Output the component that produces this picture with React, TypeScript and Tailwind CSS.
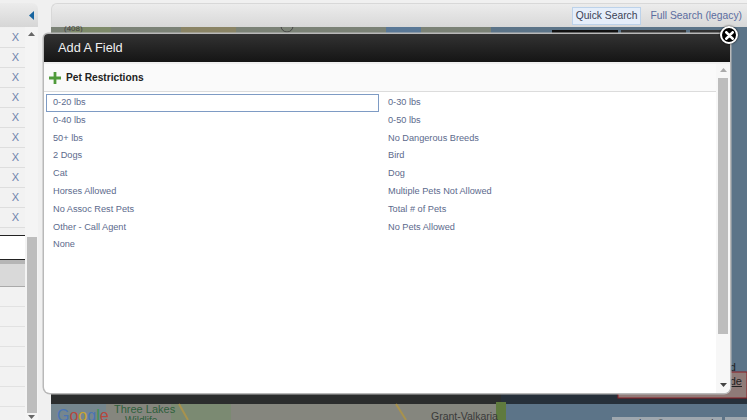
const rows = Array.from({ length: 10 });
const lowerRows = Array.from({ length: 7 });

const options = [
  ['0-20 lbs', '0-30 lbs'],
  ['0-40 lbs', '0-50 lbs'],
  ['50+ lbs', 'No Dangerous Breeds'],
  ['2 Dogs', 'Bird'],
  ['Cat', 'Dog'],
  ['Horses Allowed', 'Multiple Pets Not Allowed'],
  ['No Assoc Rest Pets', 'Total # of Pets'],
  ['Other - Call Agent', 'No Pets Allowed'],
  ['None', ''],
];

// dimmed map behind the dialog
const MapBackdrop = () => (
  <svg className="h-full w-full" viewBox="0 0 696 393" preserveAspectRatio="none">
    <rect width="696" height="393" fill="#5c7488" />
    <rect x="0" y="0" width="440" height="8" fill="#7b8276" />
    <rect x="20" y="0" width="40" height="8" fill="#7e8a6a" />
    <rect x="130" y="0" width="55" height="8" fill="#8a8465" />
    <rect x="335" y="0" width="35" height="8" fill="#5a7896" />
    <circle cx="236" cy="-1" r="6" fill="none" stroke="#444" />
    <rect x="501" y="3" width="66" height="5" fill="#111" />
    <rect x="570" y="3" width="65" height="5" fill="#333" />
    <rect x="639" y="3" width="40" height="5" fill="#333" />
    <rect x="0" y="366" width="696" height="11" fill="#26303a" />
    <rect x="0" y="366" width="450" height="11" fill="#2b2d2d" />
    <rect x="0" y="377" width="450" height="16" fill="#85867e" />
    <rect x="0" y="377" width="55" height="16" fill="#75868e" />
    <rect x="120" y="377" width="60" height="16" fill="#7b8a72" />
    <rect x="445" y="375" width="10" height="18" fill="#5f7a3e" />
    <path d="M128 377 L137 393" stroke="#a8924d" strokeWidth="2" fill="none" />
    <path d="M345 377 L355 393" stroke="#a8924d" strokeWidth="2" fill="none" />
    <rect x="567" y="345" width="129" height="26" fill="#8f7b78" stroke="#8a1f24" />
  </svg>
);

export default function App() {
  return (
    <div className="relative flex h-[420px] w-[747px] overflow-hidden bg-[#f0f0f0] font-['Liberation_Sans',Arial,sans-serif]">
      {/* Left list */}
      <aside className="flex w-[38px] shrink-0 flex-col pt-[3px]">
        <div className="flex h-[24px] shrink-0 items-center justify-end rounded-tr-md bg-gradient-to-b from-[#ececec] to-[#d6d6d6] pr-[3px]">
          <svg width="6" height="9" viewBox="0 0 6 9"><path d="M5 0v9L0 4.500z" fill="#17649f" /></svg>
        </div>
        <div className="flex min-h-0 flex-1">
          <div className="flex w-[25px] shrink-0 flex-col pt-[1px]">
            {rows.map((_, i) => (
              <div key={i} className="flex h-[20px] shrink-0 items-center justify-end border-b border-[#dedede] bg-[#f2f2f2] pr-[6px] text-[11px] leading-none text-[#6f84ad]">
                X
              </div>
            ))}
            <div className="mt-[7px] h-[25px] shrink-0 border-y border-y-[#222] bg-white" />
            <div className="h-[27px] shrink-0 border-t-[4px] border-b border-t-[#b5b5b5] border-b-[#aaa] bg-[#d9d9d9]" />
            {lowerRows.map((_, i) => (
              <div key={i} className="h-[20px] shrink-0 border-b border-[#e2e2e2] bg-[#f2f2f2]" />
            ))}
          </div>
          <div className="flex w-[13px] shrink-0 flex-col items-center bg-[#f4f4f4]">
            <svg className="mt-[5px]" width="7" height="4" viewBox="0 0 7 4"><path d="M3.500 0L7 4H0z" fill="#666" /></svg>
            <div className="mt-[201px] h-[176px] w-[10px] bg-[#bdbdbd]" />
            <svg className="mt-[2px]" width="7" height="4" viewBox="0 0 7 4"><path d="M0 0h7L3.500 4z" fill="#666" /></svg>
          </div>
        </div>
      </aside>

      {/* Main area */}
      <main className="ml-[13px] flex min-w-0 flex-1 flex-col pt-[3px]">
        <div className="flex h-[24px] shrink-0 items-center justify-end gap-[9px] rounded-tl-md border-t border-l border-[#d8d8d8] bg-gradient-to-b from-[#ececec] to-[#d8d8d8] pr-[5px] text-[10.3px]">
          <span className="border border-[#bcd2ea] bg-[#e5eefa] px-[3px] py-px leading-[14px] text-[#3b4256]">Quick Search</span>
          <span className="text-[#5b6c9f]">Full Search (legacy)</span>
        </div>
        <div className="relative min-h-0 flex-1">
          <MapBackdrop />
          <span className="absolute top-[-2px] left-[13px] text-[8px] leading-none text-[#444]">(408)</span>
          <span className="absolute bottom-[-6px] left-[6px] text-[16px] leading-[20px]">
            <span className="text-[#4a74b4]">G</span>
            <span className="text-[#b5473c]">o</span>
            <span className="text-[#c9a530]">o</span>
            <span className="text-[#4a74b4]">g</span>
            <span className="text-[#3f9150]">l</span>
            <span className="text-[#b5473c]">e</span>
          </span>
          <span className="absolute bottom-[5px] left-[63px] text-[11px] leading-none text-[#2f5f3c]">Three Lakes</span>
          <span className="absolute bottom-[-6px] left-[74px] text-[10px] leading-none text-[#2f5f3c]">Wildlife</span>
          <span className="absolute bottom-[-1px] left-[380px] text-[10.5px] leading-none text-[#3a3a3a]">Grant-Valkaria</span>
          <div className="absolute bottom-[-8px] left-[561px] flex gap-[3px] text-[9.5px] leading-[11px] whitespace-nowrap text-[#333]">
            <span className="bg-[#9ea7ae] px-[3px]">Map data ©2020 Google</span>
            <span className="bg-[#9ea7ae] px-[3px]">Terms of Use</span>
          </div>
          <span className="absolute bottom-[32px] right-[5px] text-[11px] leading-[14px] text-[#222]">
            d
            <br />
            <span className="underline">de</span>
          </span>
        </div>
      </main>

      {/* Add A Field dialog */}
      <div className="absolute left-[44px] top-[34px] flex h-[359px] w-[686px] flex-col overflow-hidden rounded-b-md rounded-t-sm bg-white shadow-[0_0_0_1.5px_#b9b9b9]">
        <div className="flex h-[28px] shrink-0 items-center bg-gradient-to-b from-[#333333] to-[#151515] pl-[14px] text-[12.8px] text-[#f0f0f0]">
          Add A Field
        </div>
        <div className="flex min-h-0 flex-1 border-t-2 border-[#f0f0f0]">
          <div className="min-w-0 flex-1">
            <div className="flex h-[28px] items-center gap-[5px] border-b border-[#dcdcdc] bg-[#fafafa] pl-[5px] text-[10.2px] font-bold text-[#222]">
              <svg width="12" height="12" viewBox="0 0 13 13"><path d="M5 0h3v5h5v3H8v5H5V8H0V5h5z" fill="#4f9a3a" /></svg>
              Pet Restrictions
            </div>
            <div className="ml-[2px] grid grid-cols-[333px_1fr] pt-[2px] text-[9.2px] text-[#5c6a8c]">
              {options.flat().map((label, i) =>
                i === 0 ? (
                  <div key={label} className="flex h-[17.800px] items-center border border-[#7e9bc4] pl-[6px]">{label}</div>
                ) : (
                  <div key={label || i} className={i % 2 ? 'flex h-[17.800px] items-center pl-[9px]' : 'flex h-[17.800px] items-center pl-[7px]'}>{label}</div>
                ),
              )}
            </div>
          </div>
          <div className="flex w-[14px] shrink-0 flex-col items-center bg-[#f7f7f7]">
            <svg className="mt-[4px]" width="7" height="4" viewBox="0 0 7 4"><path d="M3.500 0L7 4H0z" fill="#aaa" /></svg>
            <div className="mt-[6px] h-[256px] w-[10px] bg-[#bdbdbd]" />
            <svg className="mt-auto mb-[6px]" width="7" height="4" viewBox="0 0 7 4"><path d="M0 0h7L3.500 4z" fill="#444" /></svg>
          </div>
        </div>
      </div>

      {/* Close button */}
      <div className="absolute left-[720px] top-[26px] flex h-[18px] w-[18px] items-center justify-center rounded-full border-2 border-white bg-black shadow-[0_0_2px_#000]">
        <svg width="9" height="9" viewBox="0 0 10 10"><path d="M1.500 1.500l7 7M8.500 1.500l-7 7" stroke="#fff" strokeWidth="3" strokeLinecap="round" /></svg>
      </div>
    </div>
  );
}
